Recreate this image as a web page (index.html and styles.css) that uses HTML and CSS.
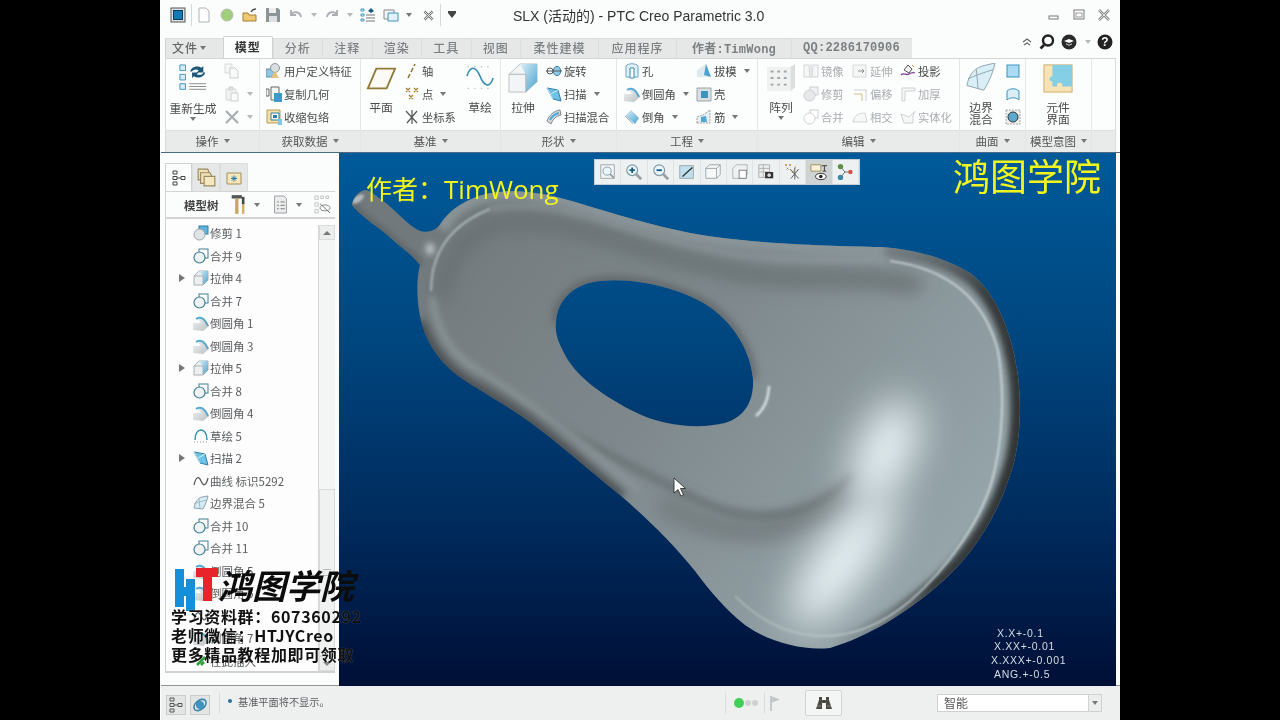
FILE: index.html
```html
<!DOCTYPE html>
<html lang="zh">
<head>
<meta charset="utf-8">
<title>SLX (活动的) - PTC Creo Parametric 3.0</title>
<link rel="stylesheet" href="styles.css">
</head>
<body>
<svg class="defs" width="0" height="0">
  <defs>
    <linearGradient id="gb" x1="0" y1="0" x2="1" y2="1"><stop offset="0" stop-color="#d9eef8"/><stop offset="1" stop-color="#4ba3d0"/></linearGradient>
    <linearGradient id="gg" x1="0" y1="0" x2="1" y2="1"><stop offset="0" stop-color="#f4f5f5"/><stop offset="1" stop-color="#b9bfc2"/></linearGradient>
    <symbol id="merge" viewBox="0 0 16 16"><rect x="6" y="1" width="9" height="9" fill="#fff" stroke="#3f7f96"/><circle cx="6.500" cy="9.500" r="5.500" fill="#eef2f3" stroke="#3f7f96" stroke-width="1.200"/></symbol>
    <symbol id="trim" viewBox="0 0 16 16"><rect x="6" y="1" width="9" height="8" fill="#5cb3dc" stroke="#2f7fa8"/><circle cx="6.500" cy="9.500" r="5.500" fill="#dfe3e4" stroke="#9aa3a6"/></symbol>
    <symbol id="ext" viewBox="0 0 16 16"><path d="M1 6l5-5h9v9l-5 5H1z" fill="#eceff0" stroke="#a7b0b3"/><path d="M6 1h9v9l-5 5V6z" fill="url(#gb)"/><path d="M1 6h9v9" fill="none" stroke="#a7b0b3"/></symbol>
    <symbol id="round" viewBox="0 0 16 16"><path d="M0 15V8h8L4 3c5-3 9 0 12 8l-6 5z" fill="url(#gg)"/><path d="M3 4c5-3 9 0 12 7" fill="none" stroke="#57abd2" stroke-width="2"/></symbol>
    <symbol id="chamfer" viewBox="0 0 16 16"><path d="M1 7l6-6 8 8-4 6z" fill="url(#gb)"/><path d="M1 7l8 8" stroke="#a9b2b5"/></symbol>
    <symbol id="sketch" viewBox="0 0 16 16"><path d="M2 12C2 5 5 2 8 2s6 3 6 10" fill="none" stroke="#2f8cb0" stroke-width="1.400"/><path d="M1 14h14" stroke="#8b9396" stroke-dasharray="1 2"/></symbol>
    <symbol id="sweep" viewBox="0 0 16 16"><path d="M1 2l11 2 3 11-8-2z" fill="#6ec2e6" stroke="#2f7fa8"/><path d="M1 2l6 11M12 4L5 8" stroke="#cdeaf6"/></symbol>
    <symbol id="curve" viewBox="0 0 16 16"><path d="M1 12C3 3 6 3 8 8s5 6 7-3" fill="none" stroke="#555" stroke-width="1.200"/></symbol>
    <symbol id="bound" viewBox="0 0 16 16"><path d="M1 13C2 7 5 3 9 2l6-1c-1 5-3 9-5 13z" fill="#d6edf7" stroke="#8ea3ad"/><path d="M6 4l1 10M1 9c4-2 9-3 13-4" fill="none" stroke="#8ea3ad" stroke-width=".700"/></symbol>
    <symbol id="doc" viewBox="0 0 16 16"><path d="M3 1h7l3 3v11H3z" fill="#fff" stroke="#aeb4b7"/></symbol>
    <symbol id="copy" viewBox="0 0 16 16"><path d="M1 1h7v9H1z" fill="#f2f3f3" stroke="#c8cccd"/><path d="M6 5h5l3 3v7H6z" fill="#f7f8f8" stroke="#b7bcbe"/></symbol>
    <symbol id="paste" viewBox="0 0 16 16"><path d="M2 3h10v11H2z" fill="#eceded" stroke="#c5c9ca"/><path d="M5 1h4v3H5z" fill="#ddd" stroke="#bbb"/><path d="M7 7h7v8H7z" fill="#fafafa" stroke="#bbb"/></symbol>
    <symbol id="udf" viewBox="0 0 16 16"><rect x="0" y="6" width="9" height="8" fill="#8fc6e0" stroke="#5b97b5"/><circle cx="9" cy="5" r="4.500" fill="#d8dde0" stroke="#8d979b"/><path d="M5 15l4-7 4 7z" fill="#e2c27e"/></symbol>
    <symbol id="cgeo" viewBox="0 0 16 16"><path d="M0 3h3v7H0zM5 1h8v13H5z" fill="#f4f5f5" stroke="#666"/><path d="M8 7h8v9H8z" fill="#3a9ccb"/></symbol>
    <symbol id="wrap" viewBox="0 0 16 16"><path d="M1 1h13v13H1z" fill="#f3dfa7" stroke="#b79c55"/><path d="M5 4h8v7H5z" fill="#fff" stroke="#2c7ea8"/><path d="M7 6h4v3H7z" fill="#2c7ea8"/><path d="M12 10h4v6h-4z" fill="#7cc6e6"/></symbol>
    <symbol id="axis" viewBox="0 0 16 16"><path d="M4 15l2-4M7 9l2-4M10 3l1-2" stroke="#8a6f2b" stroke-width="1.500"/></symbol>
    <symbol id="point" viewBox="0 0 16 16"><path d="M2 2l4 4M6 2L2 6M10 2l4 4M14 2l-4 4M5 9l4 4M9 9l-4 4" stroke="#a77d2e" stroke-width="1.300"/></symbol>
    <symbol id="csys" viewBox="0 0 16 16"><path d="M2 2l11 12M13 2L3 14M8 1v14" stroke="#555" stroke-width="1.200"/></symbol>
    <symbol id="rev" viewBox="0 0 16 16"><circle cx="4" cy="8" r="3" fill="#fff" stroke="#555"/><ellipse cx="11" cy="8" rx="3.500" ry="4.500" fill="#8fcbe8" stroke="#3a7fa3"/><path d="M0 8h16" stroke="#555"/></symbol>
    <symbol id="sweepb" viewBox="0 0 16 16"><path d="M1 12C3 6 8 2 14 1l1 5c-5 1-8 4-10 9z" fill="#d5dadc" stroke="#7c8a90"/><path d="M4 11c2-4 5-6 9-7" fill="none" stroke="#4ea8d3" stroke-width="2"/></symbol>
    <symbol id="hole" viewBox="0 0 16 16"><path d="M2 3c2-3 10-3 12 0v11H2z" fill="#dff0f8" stroke="#6ba6c4"/><path d="M6 5h4v10H6z" fill="#fff" stroke="#3986ab"/></symbol>
    <symbol id="draft" viewBox="0 0 16 16"><path d="M1 7l9-6 5 13H1z" fill="#dfeaef"/><path d="M10 1l5 13-7-2z" fill="#4ca3d0"/></symbol>
    <symbol id="shell" viewBox="0 0 16 16"><path d="M1 2h14v13H1z" fill="#d9dfe2" stroke="#9ca6aa"/><path d="M5 5h7v7H5z" fill="#3d93bd"/></symbol>
    <symbol id="rib" viewBox="0 0 16 16"><path d="M1 14V8l6-2 7-5v13z" fill="#e9eef0" stroke="#99a3a7" stroke-dasharray="2 1"/><path d="M5 8l5-1 1 6H5z" fill="#4ea8d3"/></symbol>
    <symbol id="mir" viewBox="0 0 16 16"><path d="M1 2h5l1 12H1zM15 2h-5L9 14h6z" fill="#f3f5f5" stroke="#c3c8ca"/><path d="M8 1v14" stroke="#c3c8ca"/></symbol>
    <symbol id="extd" viewBox="0 0 16 16"><path d="M1 2h13v12H1z" fill="#f2f3f3" stroke="#c9cdcf"/><path d="M6 8h6M10 6l2 2-2 2" stroke="#666" fill="none"/></symbol>
    <symbol id="proj" viewBox="0 0 16 16"><path d="M1 12c3-3 5 1 8-1s4-2 6-1" fill="none" stroke="#7b3b96" stroke-width="1.300"/><path d="M4 7l4-5 4 4-3 4z" fill="#f2f2f2" stroke="#555"/><path d="M12 2l2 2" stroke="#c79a3d"/></symbol>
    <symbol id="trimg" viewBox="0 0 16 16"><rect x="7" y="1" width="8" height="8" fill="#eee" stroke="#bcc1c3"/><circle cx="6.500" cy="9.500" r="5.500" fill="#e0e2e3" stroke="#bcc1c3"/></symbol>
    <symbol id="mrgg" viewBox="0 0 16 16"><rect x="7" y="1" width="8" height="8" fill="#fff" stroke="#bcc1c3"/><circle cx="6.500" cy="9.500" r="5.500" fill="#fff" stroke="#bcc1c3"/></symbol>
    <symbol id="ofs" viewBox="0 0 16 16"><path d="M2 4h13M14 4v11" stroke="#bcc1c3" fill="none"/><path d="M2 8h8v7" stroke="#c5a15b" fill="none"/></symbol>
    <symbol id="thk" viewBox="0 0 16 16"><path d="M2 2h13v3H5v10H2z" fill="#f5f6f6" stroke="#bcc1c3"/></symbol>
    <symbol id="isect" viewBox="0 0 16 16"><path d="M1 13c1-6 5-9 12-9l2 9z" fill="#f4f5f5" stroke="#c3c7c9"/></symbol>
    <symbol id="solid" viewBox="0 0 16 16"><path d="M1 5l3 9h9V7l2-5-6 6z" fill="#f4f5f5" stroke="#bcc1c3"/></symbol>
    <symbol id="mag" viewBox="0 0 20 20"><circle cx="8" cy="8" r="6" fill="#eaf5fa" stroke="#7e9aa7" stroke-width="1.300"/><path d="M12 12l6 6" stroke="#99a1a4" stroke-width="3"/></symbol>
  </defs>
</svg>

<div class="app">
  <header class="titlebar">
    <div class="qat">
      <svg class="qi" viewBox="0 0 16 16"><rect x="1" y="1" width="14" height="14" fill="#dfe3e4" stroke="#555"/><rect x="3.500" y="3.500" width="9" height="9" fill="#1479b5" stroke="#0a3d5c"/></svg>
      <span class="qsep"></span>
      <svg class="qi" viewBox="0 0 16 16"><use href="#doc"/></svg>
      <svg class="qi" viewBox="0 0 16 16"><circle cx="8" cy="8" r="6" fill="#9fcf78" stroke="#bbb"/></svg>
      <svg class="qi" viewBox="0 0 16 16"><path d="M1 6h5l1 2h7v6H1z" fill="#efc873" stroke="#a27e2f"/><path d="M9 5c1-2 3-3 5-3" fill="none" stroke="#555" stroke-width="1.300"/></svg>
      <svg class="qi" viewBox="0 0 16 16"><path d="M1 1h12l2 2v12H1z" fill="#8c9498"/><rect x="4" y="1" width="7" height="5" fill="#eee"/><rect x="4" y="9" width="8" height="6" fill="#dce0e2"/></svg>
      <svg class="qi" viewBox="0 0 16 16"><path d="M3 3v5h5M3 8c2-4 9-4 10 2" fill="none" stroke="#a8aeb1" stroke-width="1.800"/></svg>
      <span class="caret pale"></span>
      <svg class="qi" viewBox="0 0 16 16"><path d="M13 3v5H8M13 8c-2-4-9-4-10 2" fill="none" stroke="#a8aeb1" stroke-width="1.800"/></svg>
      <span class="caret pale"></span>
      <svg class="qi" viewBox="0 0 16 16"><path d="M1 2h3v2H1zM1 7h3v2H1zM1 12h3v2H1z" fill="none" stroke="#3f94bd"/><path d="M6 8h9M6 11h9M6 14h9" stroke="#777"/><path d="M8 4l3-3 3 3-3 2z" fill="#1d5d80"/></svg>
      <svg class="qi" viewBox="0 0 16 16"><path d="M1 3h10v9H1z" fill="#f4f5f5" stroke="#888"/><path d="M5 6h10v8H5z" fill="#e2f1f8" stroke="#3f94bd"/></svg>
      <span class="caret"></span>
      <svg class="qi q-x" viewBox="0 0 16 16"><path d="M3 3l10 10M13 3L3 13" stroke="#777" stroke-width="3"/><path d="M3 3l10 10M13 3L3 13" stroke="#fff"/></svg>
      <span class="qsep"></span>
      <span class="qdrop"></span>
    </div>
    <div class="title">SLX (活动的) - PTC Creo Parametric 3.0</div>
    <div class="winbtns">
      <svg class="wb" viewBox="0 0 12 12"><rect x="1" y="7" width="9" height="3" fill="#fff" stroke="#777"/></svg>
      <svg class="wb" viewBox="0 0 12 12"><rect x="1" y="1" width="10" height="9" fill="#fff" stroke="#777"/><rect x="3" y="4" width="6" height="4" fill="none" stroke="#999"/></svg>
      <svg class="wb" viewBox="0 0 12 12"><path d="M1 1l10 10M11 1L1 11" stroke="#888" stroke-width="2.600"/><path d="M1 1l10 10M11 1L1 11" stroke="#fff" stroke-width=".800"/></svg>
    </div>
  </header>

  <nav class="tabrow">
    <div class="tabs">
      <div class="tab t-file">文件<span class="caret"></span></div>
      <div class="tab active">模型</div>
      <div class="tab">分析</div>
      <div class="tab">注释</div>
      <div class="tab">渲染</div>
      <div class="tab">工具</div>
      <div class="tab">视图</div>
      <div class="tab t-w">柔性建模</div>
      <div class="tab t-w">应用程序</div>
      <div class="tab t-mono t-author">作者:TimWong</div>
      <div class="tab t-mono t-qq">QQ:2286170906</div>
    </div>
    <div class="helpbtns">
      <svg class="hb hb-s" viewBox="0 0 12 12"><path d="M2 6l4-3 4 3M3 9l3-2 3 2" fill="none" stroke="#666" stroke-width="1.200"/></svg>
      <svg class="hb" viewBox="0 0 16 16"><circle cx="9" cy="6.500" r="5" fill="none" stroke="#222" stroke-width="2.400"/><path d="M5 11l-3.500 3.500" stroke="#222" stroke-width="2.600"/></svg>
      <svg class="hb" viewBox="0 0 16 16"><circle cx="8" cy="8" r="7.500" fill="#2a2a2a"/><path d="M3 7l5-2 5 2-5 2z" fill="#fff"/><path d="M5 9.500c2 2 4 2 6 0" stroke="#fff" fill="none"/></svg>
      <span class="caret pale"></span>
      <svg class="hb" viewBox="0 0 16 16"><circle cx="8" cy="8" r="7.500" fill="#222"/><text x="8" y="12" class="q-mark" text-anchor="middle">?</text></svg>
    </div>
  </nav>

  <section class="ribbon">
    <div class="group g-op">
      <div class="gbody">
        <div class="big b-regen">
          <svg class="bigicon" viewBox="0 0 32 32"><path d="M2 1h6v6H2zM2 11h6v6H2zM2 21h6v6H2z" fill="#d4ecf8" stroke="#3f94bd"/><path d="M12 24h18M12 27h18M12 21h18" stroke="#888"/><path d="M13 8c1-5 8-7 12-4l2-2v7h-7l2-2c-2-2-6-1-7 1zM29 9c-1 5-8 7-12 4l-2 2V9h7l-2 2c2 1 6 1 7-2z" fill="#1c5878"/></svg>
          <span class="bl">重新生成</span><span class="caret"></span>
        </div>
        <div class="col c-tool">
          <div class="it"><svg class="ic off"><use href="#copy"/></svg></div>
          <div class="it"><svg class="ic off"><use href="#paste"/></svg><span class="caret pale"></span></div>
          <div class="it"><svg class="ic" viewBox="0 0 16 16"><path d="M2 2l12 12M14 2L2 14" stroke="#a9aeb1" stroke-width="2.200"/></svg><span class="caret pale"></span></div>
        </div>
      </div>
      <div class="glabel">操作<span class="caret"></span></div>
    </div>

    <div class="group g-get">
      <div class="gbody">
        <div class="col">
          <div class="it"><svg class="ic"><use href="#udf"/></svg>用户定义特征</div>
          <div class="it"><svg class="ic"><use href="#cgeo"/></svg>复制几何</div>
          <div class="it"><svg class="ic"><use href="#wrap"/></svg>收缩包络</div>
        </div>
      </div>
      <div class="glabel">获取数据<span class="caret"></span></div>
    </div>

    <div class="group g-dat">
      <div class="gbody">
        <div class="big b-plane">
          <svg class="bigicon" viewBox="0 0 32 32"><path d="M2 27L11 6h20l-9 21z" fill="#fbfaf4" stroke="#8f7a3c" stroke-width="2"/></svg>
          <span class="bl">平面</span>
        </div>
        <div class="col c-dat">
          <div class="it"><svg class="ic"><use href="#axis"/></svg>轴</div>
          <div class="it"><svg class="ic"><use href="#point"/></svg>点<span class="caret"></span></div>
          <div class="it"><svg class="ic"><use href="#csys"/></svg>坐标系</div>
        </div>
        <div class="big b-sk">
          <svg class="bigicon" viewBox="0 0 32 32"><path d="M2 14C6 2 12 4 16 14s10 14 14 2" fill="none" stroke="#2f8cb0" stroke-width="1.600"/><path d="M3 4h26M3 27h26" stroke="#888" stroke-dasharray="1 6"/></svg>
          <span class="bl">草绘</span>
        </div>
      </div>
      <div class="glabel">基准<span class="caret"></span></div>
    </div>

    <div class="group g-shape">
      <div class="gbody">
        <div class="big b-ext">
          <svg class="bigicon" viewBox="0 0 32 32"><path d="M1 12L13 1h18v19L19 31H1z" fill="#f2f4f5" stroke="#b9c0c3"/><path d="M13 1h18v19L19 31V12z" fill="url(#gb)"/><path d="M1 12h18v19" fill="none" stroke="#aab2b5"/></svg>
          <span class="bl">拉伸</span>
        </div>
        <div class="col c-shape">
          <div class="it"><svg class="ic"><use href="#rev"/></svg>旋转</div>
          <div class="it"><svg class="ic"><use href="#sweep"/></svg>扫描<span class="caret"></span></div>
          <div class="it"><svg class="ic"><use href="#sweepb"/></svg>扫描混合</div>
        </div>
      </div>
      <div class="glabel">形状<span class="caret"></span></div>
    </div>

    <div class="group g-eng">
      <div class="gbody">
        <div class="col c-eng1">
          <div class="it"><svg class="ic"><use href="#hole"/></svg>孔</div>
          <div class="it"><svg class="ic"><use href="#round"/></svg>倒圆角<span class="caret"></span></div>
          <div class="it"><svg class="ic"><use href="#chamfer"/></svg>倒角<span class="caret"></span></div>
        </div>
        <div class="col">
          <div class="it"><svg class="ic"><use href="#draft"/></svg>拔模<span class="caret"></span></div>
          <div class="it"><svg class="ic"><use href="#shell"/></svg>壳</div>
          <div class="it"><svg class="ic"><use href="#rib"/></svg>筋<span class="caret"></span></div>
        </div>
      </div>
      <div class="glabel">工程<span class="caret"></span></div>
    </div>

    <div class="group g-edit">
      <div class="gbody">
        <div class="big b-arr">
          <svg class="bigicon" viewBox="0 0 32 32"><path d="M1 4h25v26H1z" fill="#f0f1f1"/><path d="M26 4l5-3v25l-5 4z" fill="#dcdfe0"/><path d="M5 9h3M12 9h3M19 9h3M5 16h3M12 16h3M19 16h3M5 23h3M12 23h3M19 23h3" stroke="#9ea5a8" stroke-width="2"/></svg>
          <span class="bl">阵列</span><span class="caret"></span>
        </div>
        <div class="col c-e1 dim">
          <div class="it"><svg class="ic"><use href="#mir"/></svg>镜像</div>
          <div class="it"><svg class="ic"><use href="#trimg"/></svg>修剪</div>
          <div class="it"><svg class="ic"><use href="#mrgg"/></svg>合并</div>
        </div>
        <div class="col c-e2 dim">
          <div class="it"><svg class="ic"><use href="#extd"/></svg>延伸</div>
          <div class="it"><svg class="ic"><use href="#ofs"/></svg>偏移</div>
          <div class="it"><svg class="ic"><use href="#isect"/></svg>相交</div>
        </div>
        <div class="col c-e3 dim">
          <div class="it it-on"><svg class="ic"><use href="#proj"/></svg>投影</div>
          <div class="it"><svg class="ic"><use href="#thk"/></svg>加厚</div>
          <div class="it"><svg class="ic"><use href="#solid"/></svg>实体化</div>
        </div>
      </div>
      <div class="glabel">编辑<span class="caret"></span></div>
    </div>

    <div class="group g-surf">
      <div class="gbody">
        <div class="big b-bound">
          <svg class="bigicon" viewBox="0 0 32 32"><path d="M1 24C3 12 9 6 18 3l13-3c-2 10-6 19-12 29z" fill="#d9eef7" stroke="#8ea3ad"/><path d="M11 7l2 21M2 17c8-4 18-7 27-10" fill="none" stroke="#8ea3ad"/></svg>
          <span class="bl two">边界<br>混合</span>
        </div>
        <div class="col c-surf">
          <div class="it"><svg class="ic" viewBox="0 0 16 16"><rect x="2" y="2" width="12" height="12" fill="#a9dcf2" stroke="#3d93bd"/></svg></div>
          <div class="it"><svg class="ic" viewBox="0 0 16 16"><path d="M2 14V5c3-3 9-3 12 0v9c-3-3-9-3-12 0z" fill="#d9eef7" stroke="#3d93bd"/></svg></div>
          <div class="it"><svg class="ic" viewBox="0 0 16 16"><rect x="1" y="1" width="14" height="14" fill="#eee" stroke="#aaa" stroke-dasharray="2 1"/><circle cx="8" cy="8" r="5" fill="#5aa9cf" stroke="#333"/></svg></div>
        </div>
      </div>
      <div class="glabel">曲面<span class="caret"></span></div>
    </div>

    <div class="group g-intent">
      <div class="gbody">
        <div class="big b-comp">
          <svg class="bigicon" viewBox="0 0 32 32"><rect x="1" y="2" width="30" height="29" fill="#f8e3b4" stroke="#c8ad6b"/><path d="M10 2h21v23H20c3-3-4-6-5-2s1 3 0 2h-5v-6c-3 2-5-5 0-5z" fill="#85cfe6"/></svg>
          <span class="bl two">元件<br>界面</span>
        </div>
      </div>
      <div class="glabel">模型意图<span class="caret"></span></div>
    </div>

    <div class="group g-rest"><div class="gbody"></div><div class="glabel"></div></div>
  </section>

  <main class="main">
    <aside class="panel">
      <div class="ptabs">
        <div class="ptab on"><svg class="pi" viewBox="0 0 16 16"><path d="M2 1h4v3H2zM2 6.500h4v3H2zM2 12h4v3H2zM10 6.500h4v3h-4zM6 8h4" fill="none" stroke="#444"/></svg></div>
        <div class="ptab"><svg class="pi big-pi" viewBox="0 0 16 16"><path d="M1 1h8l1 2v7H1z" fill="#f2e2b8" stroke="#9b8b62"/><path d="M3 4h8l1 2v7H3z" fill="#f2e2b8" stroke="#9b8b62"/><path d="M6 7h9v8H6z" fill="#f6e7bf" stroke="#9b8b62"/></svg></div>
        <div class="ptab"><svg class="pi" viewBox="0 0 16 16"><path d="M1 3h14v11H1z" fill="#f6e6b9" stroke="#a1905f"/><path d="M5 8.500h6M8 5.500v6M6 6.500l4 4M10 6.500l-4 4" stroke="#2c7ea8"/></svg></div>
      </div>
      <div class="ptools">
        <span class="pname">模型树</span>
        <svg class="pt-i" viewBox="0 0 20 24"><rect x="2" y="1" width="12" height="4" fill="#555"/><rect x="6" y="5" width="4" height="18" fill="#c9a866"/><rect x="14" y="3" width="3" height="9" fill="#444"/><rect x="14" y="12" width="3" height="11" fill="#d5b165"/></svg>
        <span class="caret"></span>
        <svg class="pt-i" viewBox="0 0 20 24"><path d="M3 2h11l3 3v17H3z" fill="#eceeee" stroke="#8d9497"/><path d="M6 9h2M10 9h5M6 13h2M10 13h5M6 17h2M10 17h5" stroke="#666"/></svg>
        <span class="caret"></span>
        <svg class="pt-i" viewBox="0 0 20 24"><path d="M1 2h4v4H1zM1 10h4v4H1zM1 18h4v4H1zM8 2h3v3H8zM14 2h3v3h-3z" fill="none" stroke="#bbb"/><ellipse cx="13" cy="16" rx="6" ry="3.500" fill="none" stroke="#777"/><path d="M7 11l12 11" stroke="#666"/></svg>
      </div>
      <div class="treewrap">
        <ul class="tree">
          <li><span class="exp"></span><svg class="ic"><use href="#trim"/></svg>修剪 1</li>
          <li><span class="exp"></span><svg class="ic"><use href="#merge"/></svg>合并 9</li>
          <li><span class="exp arr"></span><svg class="ic"><use href="#ext"/></svg>拉伸 4</li>
          <li><span class="exp"></span><svg class="ic"><use href="#merge"/></svg>合并 7</li>
          <li><span class="exp"></span><svg class="ic"><use href="#round"/></svg>倒圆角 1</li>
          <li><span class="exp"></span><svg class="ic"><use href="#round"/></svg>倒圆角 3</li>
          <li><span class="exp arr"></span><svg class="ic"><use href="#ext"/></svg>拉伸 5</li>
          <li><span class="exp"></span><svg class="ic"><use href="#merge"/></svg>合并 8</li>
          <li><span class="exp"></span><svg class="ic"><use href="#round"/></svg>倒圆角 4</li>
          <li><span class="exp"></span><svg class="ic"><use href="#sketch"/></svg>草绘 5</li>
          <li><span class="exp arr"></span><svg class="ic"><use href="#sweep"/></svg>扫描 2</li>
          <li><span class="exp"></span><svg class="ic"><use href="#curve"/></svg>曲线 标识5292</li>
          <li><span class="exp"></span><svg class="ic"><use href="#bound"/></svg>边界混合 5</li>
          <li><span class="exp"></span><svg class="ic"><use href="#merge"/></svg>合并 10</li>
          <li><span class="exp"></span><svg class="ic"><use href="#merge"/></svg>合并 11</li>
          <li><span class="exp"></span><svg class="ic"><use href="#round"/></svg>倒圆角 5</li>
          <li><span class="exp"></span><svg class="ic"><use href="#round"/></svg>倒圆角 6</li>
          <li><span class="exp"></span><svg class="ic"><use href="#curve"/></svg>&nbsp;</li>
          <li><span class="exp"></span><svg class="ic"><use href="#round"/></svg>倒圆角 7</li>
          <li><span class="exp"></span><svg class="ic" viewBox="0 0 16 16"><path d="M4 12l8-8M8 12l3-3" stroke="#2e9e3a" stroke-width="2.500"/></svg>在此插入</li>
        </ul>
        <div class="scroll">
          <div class="sbtn"><span class="up"></span></div>
          <div class="strack"></div>
          <div class="sthumb"><span class="grip"></span></div>
          <div class="sbtn down"><span class="dn"></span></div>
        </div>
      </div>
    </aside>

    <div class="view">
      <svg class="scene" viewBox="339 152 777 533" preserveAspectRatio="none">
        <defs>
          <linearGradient id="bg" x1="0" y1="0" x2="0" y2="1">
            <stop offset="0" stop-color="#005a9a"/><stop offset=".35" stop-color="#00467f"/><stop offset=".7" stop-color="#002a5c"/><stop offset="1" stop-color="#000f36"/>
          </linearGradient>
          <linearGradient id="body" gradientUnits="userSpaceOnUse" x1="430" y1="210" x2="960" y2="600">
            <stop offset="0" stop-color="#72797c"/><stop offset=".45" stop-color="#7f898d"/><stop offset="1" stop-color="#98a8ad"/>
          </linearGradient>
          <radialGradient id="rimdark" gradientUnits="userSpaceOnUse" cx="1020" cy="450" r="290">
            <stop offset="0" stop-color="#303435"/><stop offset=".55" stop-color="#383c3d"/><stop offset=".95" stop-color="#596063" stop-opacity="0"/>
          </radialGradient>
          <radialGradient id="rimlight" gradientUnits="userSpaceOnUse" cx="1000" cy="440" r="340">
            <stop offset="0" stop-color="#d4dee1"/><stop offset=".55" stop-color="#d4dee1"/><stop offset="1" stop-color="#a5afb3"/>
          </radialGradient>
          <clipPath id="cp"><path clip-rule="evenodd" d="M352 204C353 196 360 189 366 189C372 190 378 197 386 202C398 212 410 226 420 230C428 232 436 230 441 222C452 206 472 194 498 191C525 188 552 194 575 201C615 213 650 224 690 232C750 243 830 245 880 246C915 248 945 257 970 272C995 290 1012 330 1018 375C1022 410 1020 450 1008 480C995 520 968 560 935 587C905 612 870 635 830 647C805 650 770 642 745 624C725 608 710 590 695 570C675 545 650 520 620 494C590 470 560 443 530 421C505 403 480 390 460 376C440 362 425 340 420 315C416 295 417 275 420 264C413 254 400 246 385 232C372 222 360 214 352 204ZM556 322C557 300 572 283 600 280C630 277 670 284 700 300C728 315 750 345 753 378C754 400 745 416 725 422C700 428 665 426 635 411C605 396 575 376 563 350C558 340 555 332 556 322Z"/></clipPath>
          <filter id="b1" filterUnits="userSpaceOnUse" x="339" y="152" width="777" height="533"><feGaussianBlur stdDeviation="1"/></filter>
          <filter id="b3" filterUnits="userSpaceOnUse" x="339" y="152" width="777" height="533"><feGaussianBlur stdDeviation="3"/></filter>
          <filter id="b4" filterUnits="userSpaceOnUse" x="339" y="152" width="777" height="533"><feGaussianBlur stdDeviation="4.500"/></filter>
          <filter id="b9" filterUnits="userSpaceOnUse" x="339" y="152" width="777" height="533"><feGaussianBlur stdDeviation="9"/></filter>
          <filter id="b22" filterUnits="userSpaceOnUse" x="339" y="152" width="777" height="533"><feGaussianBlur stdDeviation="20"/></filter>
        </defs>
        <rect x="339" y="152" width="777" height="533" fill="url(#bg)"/>
        <g clip-path="url(#cp)">
          <rect x="339" y="152" width="777" height="533" fill="url(#body)"/>
          <!-- shadow beneath the inner rim -->
          <path d="M442 300C442 265 460 236 497 222C535 216 575 226 612 238C665 254 720 272 780 276C830 278 880 275 920 285" fill="none" stroke="#686f72" stroke-width="16" filter="url(#b9)"/>
          <path d="M556 322C557 300 572 283 600 280C630 277 670 284 700 300C728 315 750 345 753 378" fill="none" stroke="#545a5d" stroke-width="6" filter="url(#b4)"/>
          <!-- crease of the scoop -->
          <path d="M660 500C720 540 790 540 850 490" fill="none" stroke="#747d80" stroke-width="22" filter="url(#b9)"/>
          <path d="M480 376C545 424 625 462 700 500C755 526 815 518 853 473" fill="none" stroke="#5d6466" stroke-width="5" filter="url(#b4)"/>
          <!-- specular patches -->
          <ellipse cx="885" cy="450" rx="26" ry="55" transform="rotate(24 885 450)" fill="#eef8fb" filter="url(#b22)"/>
          <ellipse cx="842" cy="560" rx="26" ry="78" transform="rotate(36 842 560)" fill="#eef8fb" filter="url(#b22)"/>
          <!-- outer band -->
          <path d="M442 228C452 208 472 196 498 193C525 190 552 196 575 203C615 215 650 226 690 234C750 245 830 247 885 250" fill="none" stroke="#8a9599" stroke-width="11" filter="url(#b3)"/>
          <path d="M885 247C920 249 950 259 970 273C995 291 1012 330 1018 375C1022 410 1020 450 1008 480C995 520 968 560 935 587C905 612 870 635 830 647C800 650 770 642 745 624" fill="none" stroke="url(#rimdark)" stroke-width="19" filter="url(#b3)"/>
          <path d="M420 320C426 342 442 364 462 378C482 392 507 405 532 423C562 445 592 472 622 496" fill="none" stroke="#464b4d" stroke-width="11" filter="url(#b4)"/>
          <path d="M432 296C436 328 450 350 470 364C495 380 520 396 545 415C580 440 610 465 640 490" fill="none" stroke="#8a9498" stroke-width="6" filter="url(#b3)"/>
          <path d="M352 204C360 214 372 222 385 232C400 246 413 254 420 264" fill="none" stroke="#5c6366" stroke-width="7" filter="url(#b3)"/>
          <!-- bright inner rim -->
          <path d="M431 290C431 252 450 224 490 208" fill="none" stroke="#aab5b9" stroke-width="2" filter="url(#b1)"/>
          <path d="M490 208C530 200 560 208 610 222C660 238 720 255 780 258C830 260 860 258 890 260" fill="none" stroke="#949fa3" stroke-width="3" filter="url(#b3)"/>
          <path d="M890 260C950 268 985 300 998 350C1005 390 1003 440 992 480C980 520 950 565 910 600C880 625 850 635 825 635C790 635 760 620 735 595" fill="none" stroke="url(#rimlight)" stroke-width="1.600" filter="url(#b1)"/>
          <ellipse cx="430" cy="248" rx="4" ry="6" fill="#c6cfd2" filter="url(#b3)"/>
          <ellipse cx="358" cy="198" rx="7" ry="3" transform="rotate(-35 358 198)" fill="#b4bdc0" filter="url(#b1)"/>
          <path d="M769 385C768 400 764 408 756 415" fill="none" stroke="#d9e3e6" stroke-width="2.500" filter="url(#b1)"/>
        </g>
        <text class="tol" x="997" y="636">X.X+-0.1</text>
        <text class="tol" x="994" y="649">X.XX+-0.01</text>
        <text class="tol" x="991" y="663">X.XXX+-0.001</text>
        <text class="tol" x="994" y="677">ANG.+-0.5</text>
        <path d="M674 477v15l4-3.500 3 6.500 2.500-1-3-6.500h5z" fill="#fff" stroke="#222" stroke-width=".800"/>
      </svg>

      <div class="vbar">
        <div class="vb"><svg class="vi" viewBox="0 0 20 20"><rect x="2" y="2" width="15" height="15" fill="#f3f5f5" stroke="#9aa3a6"/><use href="#mag" x="3" y="3" width="15" height="15"/></svg></div>
        <div class="vb"><svg class="vi" viewBox="0 0 20 20"><use href="#mag"/><path d="M5 8h6M8 5v6" stroke="#125c86" stroke-width="2"/></svg></div>
        <div class="vb"><svg class="vi" viewBox="0 0 20 20"><use href="#mag"/><path d="M5 8h6" stroke="#125c86" stroke-width="2"/></svg></div>
        <div class="vb"><svg class="vi" viewBox="0 0 20 20"><rect x="2" y="3" width="15" height="14" fill="#bfe0ef" stroke="#9aa3a6"/><path d="M5 15L16 5" stroke="#333" stroke-width="1.500"/></svg></div>
        <div class="vb"><svg class="vi" viewBox="0 0 20 20"><path d="M2 6l4-4h12v11l-4 4H2z" fill="#f6f8f8" stroke="#96a0a4"/><path d="M2 6h12v11M14 6l4-4" fill="none" stroke="#96a0a4"/></svg></div>
        <div class="vb"><svg class="vi" viewBox="0 0 20 20"><path d="M2 6l4-4h12v11l-4 4H2z" fill="#f0f2f2" stroke="#a8b0b3"/><rect x="9" y="8" width="8" height="9" fill="#fff" stroke="#777"/></svg></div>
        <div class="vb"><svg class="vi" viewBox="0 0 20 20"><path d="M2 2h12v14H2z" fill="#eef0f0" stroke="#aaa"/><path d="M2 6h12M2 10h12M7 2v14" stroke="#aaa"/><rect x="9" y="10" width="9" height="7" fill="#333"/><circle cx="13.500" cy="13.500" r="2" fill="#ddd"/></svg></div>
        <div class="vb"><svg class="vi" viewBox="0 0 20 20"><use href="#csys" x="5" y="5" width="14" height="14"/><use href="#point" x="0" y="0" width="9" height="9"/><path d="M9 11l5-9" stroke="#8a6f2b" stroke-dasharray="3 2"/></svg></div>
        <div class="vb sel"><svg class="vi" viewBox="0 0 20 20"><path d="M1 2h11v7H1z" fill="#f8f2dc" stroke="#a08c4c"/><path d="M13 3h6M16 3v6M14 9h4" stroke="#333"/><ellipse cx="12" cy="15" rx="6" ry="3.500" fill="#fff" stroke="#222"/><circle cx="12" cy="15" r="2" fill="#222"/></svg></div>
        <div class="vb"><svg class="vi" viewBox="0 0 20 20"><path d="M5 4l5 6-5 6M10 10h6" fill="none" stroke="#666"/><circle cx="5" cy="4" r="3" fill="#5f8f42"/><circle cx="5" cy="16" r="3" fill="#3d86ab"/><circle cx="16" cy="10" r="2.500" fill="#d0574d"/></svg></div>
      </div>
      <div class="author">作者：TimWong</div>
      <div class="brand">鸿图学院</div>
    </div>

    <div class="wm">
      <div class="wm-head">
        <svg class="wm-logo" viewBox="0 0 46 46"><path d="M1 4h9v38H1zM12 14h9v32h-9zM8 22h8v9H8z" fill="#1590d8"/><path d="M22 3h22v9h-6v24h-9V12h-7z" fill="#e8232a"/></svg>
        <span class="wm-title">鸿图学院</span>
      </div>
      <div class="wm-line">学习资料群：607360292</div>
      <div class="wm-line">老师微信：HTJYCreo</div>
      <div class="wm-line">更多精品教程加即可领取</div>
    </div>
  </main>

  <footer class="status">
    <div class="st-left">
      <div class="sq"><svg class="pi" viewBox="0 0 16 16"><path d="M2 1h4v3H2zM2 6.500h4v3H2zM2 12h4v3H2zM10 6.500h4v3h-4zM6 8h4" fill="none" stroke="#555"/></svg></div>
      <div class="sq"><svg class="pi" viewBox="0 0 16 16"><ellipse cx="8" cy="8" rx="7" ry="4.500" transform="rotate(-40 8 8)" fill="none" stroke="#3d86ab" stroke-width="1.600"/><circle cx="8" cy="8" r="4" fill="#3d93bd"/></svg></div>
      <span class="st-sep"></span>
      <span class="bullet"></span>
      <span class="msg">基准平面将不显示。</span>
    </div>
    <div class="st-right">
      <span class="st-sep"></span>
      <span class="led on"></span><span class="led"></span><span class="led"></span>
      <span class="st-sep s2"></span>
      <svg class="flag" viewBox="0 0 12 16"><path d="M2 1v15" stroke="#b9bdbe" stroke-width="1.500"/><path d="M2 1l9 3.500L2 8z" fill="#c3c7c8"/></svg>
      <span class="st-sep s3"></span>
      <div class="find"><svg class="fi" viewBox="0 0 16 14"><path d="M3 1h3v3h4V1h3v3l3 9h-6V7H6v6H0l3-9z" fill="#4d4a42"/><path d="M1 10h4M11 10h4" stroke="#8a877e"/></svg></div>
      <div class="select"><span class="sv">智能</span><span class="sa"><span class="caret"></span></span></div>
    </div>
  </footer>
</div>
</body>
</html>
```
FILE: styles.css
```css
* { box-sizing: border-box; margin: 0; padding: 0; }
html, body { width: 1280px; height: 720px; overflow: hidden; background: #000; }
body { font-family: "Noto Sans CJK SC", "Liberation Sans", sans-serif; font-size: 11.3px; color: #4a4a4a; }
.defs { position: absolute; }
.app { width: 960px; height: 720px; margin-left: 160px; padding-left: 1px; background: #fbfcfc; display: flex; flex-direction: column; filter: blur(.35px); }

.caret { display: inline-block; width: 0; height: 0; border: 3.500px solid transparent; border-top: 4px solid #777; border-bottom: 0; margin-left: 5px; flex: none; }
.caret.pale { border-top-color: #b5b9ba; }

/* title bar */
.titlebar { height: 36px; flex: none; display: flex; align-items: center; position: relative; padding: 0 9px; }
.qat { display: flex; align-items: center; gap: 7px; margin-top: -6px; }
.qat .caret { margin-left: 0; }
.qi { width: 16px; height: 16px; flex: none; }
.q-x { width: 13px; height: 13px; margin-left: 3px; }
.qsep { width: 1px; height: 22px; background: #d5d8d9; margin: 0 -2.500px; }
.qdrop { width: 0; height: 0; border: 4px solid transparent; border-top: 5px solid #444; border-bottom: 0; margin-left: 3px; box-shadow: 0 -2px 0 #444; }
.title { position: absolute; left: 352px; top: 7px; font: 14px/18px "Liberation Sans", "Noto Sans CJK SC", sans-serif; color: #333; }
.winbtns { margin-left: auto; display: flex; gap: 13px; margin-top: -6px; margin-right: 1px; }
.wb { width: 12px; height: 12px; }

/* tabs */
.tabrow { height: 22px; flex: none; display: flex; padding-left: 4px; align-items: flex-end; position: relative; z-index: 1; }
.tabs { display: flex; height: 20px; width: 747px; background: #e6e8e8; border-top: 1px solid #dadcdc; flex: none; }
.tab { width: 49.500px; display: flex; align-items: center; justify-content: center; padding-bottom: 2px; font-size: 12px; letter-spacing: 1px; font-weight: 500; color: #7c8082; border-left: 1px solid #dcdede; }
.t-file { width: 58px; justify-content: flex-start; padding-left: 6px; border-left: 1px solid #cfd2d2; color: #666; }
.t-file .caret { margin-left: 2px; }
.t-w { width: 78px; }
.t-mono { font-family: "Liberation Mono", "Noto Sans CJK SC", monospace; font-weight: 700; letter-spacing: .25px; }
.t-author { width: 115px; }
.t-qq { width: 120px; }
.tab.active { background: #fcfdfd; color: #333; font-weight: 700; height: 22px; margin-top: -3px; border: 1px solid #cfd2d2; border-bottom: 0; border-radius: 2px 2px 0 0; }
.helpbtns { display: flex; align-items: center; gap: 6px; margin-left: auto; margin-right: 7px; margin-bottom: 8px; }
.hb { width: 16px; height: 16px; }
.hb-s { width: 12px; height: 12px; }
.helpbtns .caret { margin-left: 2px; }
.q-mark { font: 700 12px "Liberation Sans", sans-serif; fill: #fff; }

/* ribbon */
.ribbon { height: 94px; flex: none; display: flex; margin-left: 4px; margin-right: 4px; border: 1px solid #d9dbdb; border-top: 1px solid #d3d5d5; border-bottom: 0; background: #fcfdfd; }
.group { display: flex; flex-direction: column; border-right: 1px solid #e4e6e6; flex: none; }
.gbody { height: 71px; display: flex; }
.glabel { height: 22px; padding-bottom: 1px; background: #e9ebeb; border-top: 1px solid #dcdede; display: flex; align-items: center; justify-content: center; font-size: 11.500px; color: #555; }
.g-op { width: 94px; } .g-get { width: 101px; } .g-dat { width: 140px; } .g-shape { width: 116px; }
.g-eng { width: 141px; } .g-edit { width: 202px; } .g-surf { width: 66px; } .g-intent { width: 66px; } .g-rest { flex: 1; border-right: 0; }

.col { display: flex; flex-direction: column; }
.it { height: 23px; display: flex; align-items: center; gap: 2px; white-space: nowrap; }
.ic { width: 16px; height: 16px; flex: none; }
.off { opacity: .7; }
.dim .it { color: #a9adaf; }
.dim .ic { opacity: .75; }
.dim .it-on { color: #4a4a4a; }
.dim .it-on .ic { opacity: 1; }

.big { display: flex; flex-direction: column; align-items: center; flex: none; padding-top: 4px; }
.bigicon { width: 30px; height: 30px; flex: none; }
.bl { margin-top: 6px; font-size: 11.800px; line-height: 16px; text-align: center; }
.bl.two { line-height: 12px; margin-top: 8px; }
.big .caret { margin: 1px 0 0; }

.b-regen { width: 50px; margin-left: 2px; }
.b-regen .bigicon { height: 32px; }
.b-regen .bl { margin-top: 5px; }
.c-tool { margin-left: 6px; }
.g-get .col { margin-left: 6px; }
.b-plane { width: 30px; margin-left: 5px; }
.c-dat { margin-left: 8px; width: 59px; }
.b-sk { width: 30px; margin-left: 2px; }
.b-ext { width: 32px; margin-left: 6px; }
.c-shape { margin-left: 7px; }
.c-eng1 { margin-left: 7px; width: 72px; }
.b-arr { width: 34px; margin-left: 6px; }
.c-e1 { margin-left: 5px; width: 49px; }
.c-e2 { width: 48px; }
.b-bound { width: 34px; margin-left: 4px; }
.c-surf { margin-left: 7px; }
.b-comp { width: 34px; margin-left: 15px; }

/* main */
.main { flex: 1; min-height: 0; display: flex; position: relative; border-top: 1px solid #4a6b86; }
.panel { width: 178px; flex: none; padding: 10px 4px 12px 4px; display: flex; flex-direction: column; }
.ptabs { display: flex; height: 28px; flex: none; }
.ptab { width: 28px; display: flex; align-items: center; justify-content: center; background: #e6e8e8; border: 1px solid #dcdede; border-bottom: 0; }
.ptab.on { background: #fcfdfd; border-color: #cfd2d2; width: 27px; }
.pi { width: 16px; height: 16px; }
.big-pi { width: 19px; height: 19px; }
.ptools { height: 28px; flex: none; display: flex; align-items: center; border: 1px solid #d3d5d5; border-right: 0; border-bottom-width: 2px; padding-left: 18px; background: #fbfcfc; }
.pname { font-weight: 700; font-size: 11.500px; color: #444; margin-right: 11px; }
.pt-i { width: 17px; height: 23px; flex: none; }
.ptools .caret { margin: 0 12px 0 7px; }
.treewrap { flex: 1; min-height: 0; display: flex; border: 1px solid #cfd2d2; border-top: 0; border-bottom-width: 2px; border-right: 0; background: #fdfdfd; }
.tree { flex: 1; list-style: none; padding-top: 3px; overflow: hidden; font-size: 11.500px; color: #5a5d5f; }
.tree li { height: 22.500px; display: flex; align-items: center; padding-left: 13px; white-space: nowrap; }
.tree .ic { margin-right: 1px; }
.exp { width: 14px; flex: none; }
.exp.arr::before { content: ""; display: block; width: 0; height: 0; border: 4px solid transparent; border-left: 6px solid #777; border-right: 0; }
.scroll { width: 17px; flex: none; margin: 6px 0 0; display: flex; flex-direction: column; background: #f4f5f5; border-left: 1px solid #d5d7d7; }
.sbtn { height: 15px; flex: none; display: flex; align-items: center; justify-content: center; background: #eceeee; border: 1px solid #d9dbdb; }
.up { width: 0; height: 0; border: 4px solid transparent; border-bottom: 4px solid #777; border-top: 0; }
.dn { width: 0; height: 0; border: 4px solid transparent; border-top: 4px solid #888; border-bottom: 0; }
.strack { height: 249px; flex: none; }
.sthumb { flex: 1; background: #f0f1f1; border: 1px solid #d9dbdb; display: flex; align-items: center; justify-content: center; }
.grip { width: 8px; height: 7px; border-top: 1px solid #bbb; border-bottom: 1px solid #bbb; }

.view { width: 777px; flex: none; position: relative; }
.scene { display: block; width: 777px; height: 533px; }
.tol { font: 10.500px "Liberation Sans", sans-serif; fill: #d5dde4; letter-spacing: .7px; }

.vbar { position: absolute; left: 255px; top: 6px; width: 266px; height: 26px; display: flex; background: #eef1f2; border: 1px solid #c7d0d6; }
.vb { flex: 1; display: flex; align-items: center; justify-content: center; border-right: 1px solid #dfe3e4; }
.vb.sel { background: #cfd3d4; }
.vi { width: 18px; height: 18px; }

.author { position: absolute; left: 27px; top: 18px; font: 26px/36px "Open Sans", "Noto Sans CJK SC", sans-serif; color: #f2f51e; white-space: nowrap; }
.brand { position: absolute; left: 614px; top: -1px; font: 37px/46px "Noto Sans CJK SC", sans-serif; color: #f2f51e; white-space: nowrap; }

.wm { position: absolute; left: 10px; top: 412px; width: 200px; color: #111; }
.wm-head { display: flex; align-items: flex-start; height: 42px; }
.wm-logo { width: 46px; height: 46px; flex: none; margin-left: 3px; }
.wm-title { font: italic 700 34px/40px "Noto Sans CJK SC", sans-serif; margin-left: -2px; color: #0c0c0c; white-space: nowrap; }
.wm-line { font: 700 16px/19px "Noto Sans CJK SC", "Liberation Sans", sans-serif; white-space: nowrap; letter-spacing: .65px; text-shadow: 0 0 1px rgba(255,255,255,.45); }

/* status */
.status { height: 35px; flex: none; background: #eef0f0; border-top: 1px solid #8f9394; display: flex; align-items: center; justify-content: space-between; padding: 0 18px 0 5px; }
.st-left, .st-right { display: flex; align-items: center; }
.sq { width: 20px; height: 20px; margin: 4px 4px 0 0; background: #e3e5e5; border: 1px solid #c9cccc; display: flex; align-items: center; justify-content: center; }
.st-sep { width: 1px; height: 22px; background: #dcdede; margin: 0 8px 0 5px; }
.bullet { width: 4px; height: 4px; border-radius: 50%; background: #2b6f9c; margin: -4px 6px 0 0; }
.msg { font-size: 10.200px; color: #5a5d5f; margin-top: -4px; }
.led { width: 6px; height: 6px; border-radius: 50%; background: #cfd2d2; margin-right: 1px; }
.led.on { width: 10px; height: 10px; background: #3fcf58; }
.flag { width: 12px; height: 16px; flex: none; }
.st-sep.s2 { margin: 0 4px 0 5px; }
.st-sep.s3 { margin: 0 11px 0 12px; visibility: hidden; }
.find { width: 37px; height: 26px; background: #f4f5f5; border: 1px solid #d2d4d4; border-radius: 2px; display: flex; align-items: center; justify-content: center; margin-right: 95px; }
.fi { width: 16px; height: 14px; }
.select { width: 165px; height: 18px; display: flex; background: #fff; border: 1px solid #cfd2d2; }
.sv { flex: 1; padding-left: 6px; font-size: 12px; line-height: 16px; color: #555; }
.sa { width: 13px; display: flex; align-items: center; justify-content: center; background: #eceeee; border-left: 1px solid #cfd2d2; }
.sa .caret { margin: 0; }
```
